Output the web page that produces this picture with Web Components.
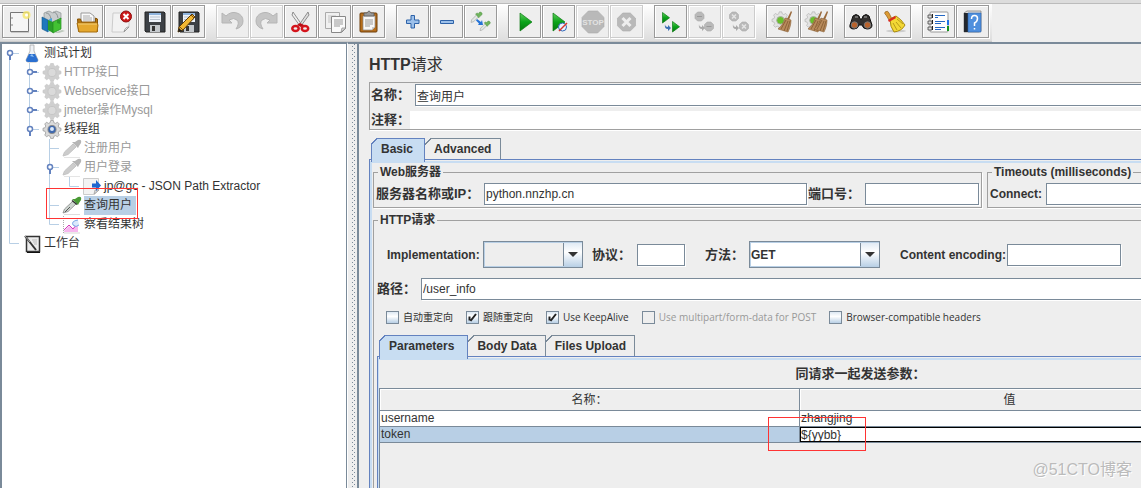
<!DOCTYPE html>
<html lang="zh-CN">
<head>
<meta charset="utf-8">
<title>HTTP请求</title>
<style>
  html, body { margin: 0; height: 100%; overflow: hidden; background: #eee; }
  body { font: 12px/16px "Liberation Sans", "Noto Sans CJK SC", sans-serif; color: #333; }
</style>
</head>
<body>
<jm-app></jm-app>

<script>
const define = (name, css, html, setup) => {
  customElements.define(name, class extends HTMLElement {
    connectedCallback() {
      if (this.shadowRoot) return;
      const root = this.attachShadow({ mode: 'open' });
      const body = typeof html === 'function' ? html(this) : html;
      root.innerHTML = `<style>*{box-sizing:border-box}${css}</style>${body}`;
      if (setup) setup(this, root);
    }
  });
};

/* ---------- icon shapes ---------- */
const floppy = `<path d="M7 7h19l1 1v19H8l-1-1z" fill="#3c4045" stroke="#222"/><path d="M11 8h12v9H11z" fill="#eef3fa"/><path d="M11 8h12v2H11z" fill="#8fb4dd"/><path d="M12 12h10M12 14.500h10" stroke="#b9c3cf"/><path d="M12 20h10v7H12z" fill="#c4c8cc"/><path d="M14 21h3v5h-3z" fill="#333"/>`;
const gear = (f, s, c) => `<g fill="${f}" stroke="${s}"><path d="M8.500 1h3l.6 2.400 1.800.8 2.200-1.300 2 2-1.200 2.200.8 1.900 2.300.6v2.800l-2.300.6-.8 1.900 1.200 2.200-2 2-2.200-1.300-1.800.8-.6 2.300h-3l-.6-2.300-1.800-.8-2.200 1.300-2-2 1.200-2.200-.8-1.900L0 12.400V9.600L2.300 9l.8-1.900-1.200-2.200 2-2 2.200 1.300 1.800-.8z" stroke-width=".7"/><circle cx="10" cy="11" r="4.500" fill="${c}"/></g>`;
const broom = (x) => `<g transform="translate(${x} 0)"><path d="M25 6l1 1-3 8-2-1z" fill="#9a6a3c"/><path d="M19 13l6 2c0 4-1 8-3 12l-10-3c3-3 6-6 7-11z" fill="#b88a5c" stroke="#8c6238" stroke-width=".6"/><path d="M20 15l-5 9M22 16l-4 10M24 16l-3 10" stroke="#80592f" stroke-width=".8" fill="none"/></g>`;
const octagon = (x, y, r) => { const k = r * .42; return `<path d="M${x-k} ${y-r}H${x+k}L${x+r} ${y-k}V${y+k}L${x+k} ${y+r}H${x-k}L${x-r} ${y+k}V${y-k}Z" fill="#b9b9b9" stroke="#aaa" stroke-width=".6"/>`; };
const tri = (x, y, s) => `<path d="M${x} ${y}l${s} ${s*.75}L${x} ${y+s*1.5}z" fill="url(#g)" stroke="#0c7a12" stroke-width=".7"/>`;
const green = `<defs><linearGradient id="g" x1="0" y1="0" x2="0" y2="1"><stop offset="0" stop-color="#5fd05c"/><stop offset=".5" stop-color="#0aa31a"/><stop offset="1" stop-color="#04780f"/></linearGradient></defs>`;
const pip = (x, y, k) => `<g transform="translate(${x} ${y}) scale(${k})"><path d="M0 16l1-4 8-8 3 3-8 8z" fill="#e2e8e4" stroke="#999" stroke-width=".9"/><path d="M7 3l5 6 1.500-2L17 4c1-2-2-5-4-3.500L11 2.500 9.500 1.500z" fill="#6fb45c" stroke="#4b8a40" stroke-width=".7"/></g>`;
const smallArrow = `<path d="M11 19q0 3 3 3v-2l3 3-3 3v-2q-4 0-3-5z"`;

const ICONS = {
  new: `<path d="M8.500 7.500h18v19h-18z" fill="#f5f5f5" stroke="#777"/><path d="M9 27.500h18" stroke="#c8c8c8"/><path d="M10 12v2M10 19v2" stroke="#888"/><circle cx="24.500" cy="10" r="4" fill="#f6e76a" opacity=".8"/><circle cx="24.500" cy="10" r="1.500" fill="#fff"/>`,
  templates: `<path d="M8 8l5-2 4 2 3-2 5 2v6l-12 4-5-4z" fill="#c8cccd" stroke="#8d9294" stroke-width=".7"/><path d="M10 8q4 0 5 6M17 7q4 0 5 6" stroke="#8d9294" fill="none"/><path d="M6 12l6 3v12l-6-3z" fill="#1f78bd" stroke="#135488" stroke-width=".6"/><path d="M12 15l4-2v12l-4 2z" fill="#4aa3e0"/><path d="M12 15l5 2v11l-5-3z" fill="#2c9e2a"/><path d="M17 17l8-4v11l-8 4z" fill="#43c233" stroke="#1f8a1e" stroke-width=".7"/><path d="M21 18v-3h3v4z" fill="#2d9d28"/><path d="M18 28l8-3 3 1-6 2z" fill="#bcc8bb"/>`,
  open: `<path d="M11 19V8h9l4 3v8z" fill="#fafafa" stroke="#999"/><path d="M13 11h7M13 13h9M13 15h9" stroke="#aaa"/><path d="M7.500 14h3l1 3h14V13l2 1v12.500h-19z" fill="#b9780f" stroke="#87550a"/><path d="M7 18h20l1 2-1 7H9z" fill="#e5a82e" stroke="#a66e10"/><path d="M8 19h19" stroke="#f6d078"/>`,
  close: `<path d="M9 8h16v14l-5 5H8z" fill="#f2f2f2" stroke="#ccc"/><path d="M20 27q1-5 5-5z" fill="#fff" stroke="#999"/><circle cx="22" cy="11.500" r="5.500" fill="#cc1a1a" stroke="#8e1010"/><path d="M19.500 9l5 5M24.500 9l-5 5" stroke="#fff" stroke-width="2"/>`,
  save: floppy,
  saveas: floppy + `<path d="M6 27l1-5L20 9l3 3L11 25z" fill="#f2b632" stroke="#5f3b05"/><path d="M8 22l3 3M19 10l3 3" stroke="#7a4d10"/><path d="M6 27l1-4 3 3z" fill="#222"/>`,
  undo: `<path d="M6 8v10h10l-3-3q5-3 8 0t-1 9q7-2 7-8t-6-8q-6-2-11 3z" fill="#c5c5c5" stroke="#b5b5b5"/>`,
  redo: `<path d="M27 8v10H17l3-3q-5-3-8 0t1 9q-7-2-7-8t6-8q6-2 11 3z" fill="#c5c5c5" stroke="#b5b5b5"/>`,
  cut: `<path d="M9 7l9 13-2 1L8 10z" fill="#eee" stroke="#777" stroke-width=".8"/><path d="M24 7l-9 13 2 1 8-11z" fill="#ddd" stroke="#777" stroke-width=".8"/><g fill="none" stroke="#d4141c" stroke-width="2.500"><ellipse cx="11.500" cy="23.500" rx="3.200" ry="2.500"/><ellipse cx="21" cy="23.500" rx="3.200" ry="2.500"/></g><path d="M13 20l3-2 4 2-3 2z" fill="#b80e16"/>`,
  copy: `<path d="M7.500 7.500h14v16h-14z" fill="#f0f0f0" stroke="#aaa"/><path d="M10 11h8M10 13h8M10 15h8M10 17h5" stroke="#c2c2c2"/><path d="M13.500 11.500h14v12l-4 4h-10z" fill="#fafafa" stroke="#888"/><path d="M16 15h9M16 17h9M16 19h9M16 21h6" stroke="#999"/><path d="M23 27l1-4h4z" fill="#ddd" stroke="#888" stroke-width=".7"/>`,
  paste: `<rect x="8" y="8" width="17" height="19" rx="1" fill="#b66e1c" stroke="#6e3e0a"/><path d="M11 11h12v11l-3 3h-9z" fill="#f8f8f8" stroke="#888" stroke-width=".7"/><path d="M13 15h8M13 17h8M13 19h8M13 21h5" stroke="#999"/><path d="M12 10V8h3q2-4 4 0h3v3H12z" fill="#999" stroke="#555" stroke-width=".7"/><path d="M20 25v-3h3z" fill="#ccc"/>`,
  expand: `<path d="M15 10.500h3.500V15H23v3.500h-4.500V23H15v-4.500h-4.500V15H15z" fill="#9cc0ea" stroke="#2d62a8"/>`,
  collapse: `<path d="M10.500 15.500h13v3h-13z" fill="#9cc0ea" stroke="#2d62a8"/>`,
  toggle: pip(7, 7, .65) + pip(16, 16, .6) + `<path d="M13 14l4 3 1-2 1 5-5 0 1-1.500-3-3z" fill="#2573d6"/>`,
  start: green + tri(12, 8, 12),
  startnopause: green + tri(11, 8, 12) + `<circle cx="20.500" cy="22" r="4" fill="#eaf3ff" stroke="#2f67b8"/><path d="M17 26L25 18" stroke="#d8352d" stroke-width="1.500"/>`,
  stop: octagon(17, 17, 11) + `<text x="17" y="20" text-anchor="middle" font-family="Liberation Sans" font-weight="bold" font-size="8" fill="#e3e3e3">STOP</text>`,
  shutdown: octagon(16.5, 17, 9) + `<path d="M12.500 13l8 8M20.500 13l-8 8" stroke="#eee" stroke-width="3"/>`,
  rstart: green + tri(8.5, 7.5, 7) + tri(18.5, 16.5, 7) + smallArrow + ` fill="#3d6fb4"/>`,
  rstop: octagon(11.5, 11.5, 4.5) + octagon(21, 21.5, 4.5) + `<path d="M9 11.500h5M18.500 21.500h5" stroke="#999"/>` + smallArrow + ` fill="#aaa"/>`,
  rshutdown: octagon(12, 11.5, 4.5) + octagon(22, 21.5, 4.5) + `<path d="M10 9.500l4 4M14 9.500l-4 4M20 19.500l4 4M24 19.500l-4 4" stroke="#e5e5e5" stroke-width="1.500"/>` + smallArrow + ` fill="#aaa"/>`,
  clear: `<g transform="translate(6 6) scale(.85)">${gear('#e3e3e3', '#aaa', '#6abf2c')}</g>` + broom(0),
  clearall: `<g transform="translate(5 6) scale(.85)">${gear('#e3e3e3', '#aaa', '#6abf2c')}</g>` + broom(-4) + broom(2),
  search: `<path d="M9 11q3-3 6 0l1 3h2l1-3q3-3 6 0l3 9q0 4-5 4-4 0-5-4h-3q-1 4-5 4-5 0-4-4z" fill="#33302e" stroke="#111"/><circle cx="10.500" cy="20" r="3.200" fill="#b9622b" stroke="#777"/><circle cx="23.500" cy="20" r="3.200" fill="#b9622b" stroke="#777"/><path d="M11 12h3M20 12h3" stroke="#aaa"/>`,
  reset: `<ellipse cx="18" cy="26" rx="10" ry="1.500" fill="#ccc"/><path d="M7 7q3-2 4 1l3 6-3 1-3-5q-2-1-1-3z" fill="#dc9b35" stroke="#93601a" stroke-width=".7"/><path d="M12 14l6-3q5 3 9 9-3 6-11 7-4-5-4-13z" fill="#f3d834" stroke="#a98a10"/><path d="M15 18l4 7M18 17l5 6M19 14l6 5" stroke="#b79b1a" fill="none"/><path d="M10 15l7-4 1 2-7 4z" fill="#d92b20"/>`,
  options: `<rect x="8" y="7" width="18" height="20" rx="1" fill="#fdfdfd" stroke="#999"/><path d="M13 10.500h10M13 12.500h3M13 16.500h10M13 18.500h6M13 22.500h10M13 24.500h6" stroke="#2468c4"/><path d="M25 15h2v5h-2z" fill="#1f73e8"/><path d="M25 21h2v5h-2z" fill="#12931b"/><g fill="#ddd" stroke="#444" stroke-width=".8"><path d="M6 10h4v3H6zM6 16h4v3H6zM6 22h4v3H6z"/></g><path d="M10.500 9v4M10.500 15v4M10.500 21v4" stroke="#222"/>`,
  help: `<path d="M8 8l3-2h14v20l-2 1H8z" fill="#ddd" stroke="#777" stroke-width=".7"/><path d="M8 8h4v19H8z" fill="#23272d"/><path d="M12 8h13v19H12z" fill="#4f8fdd" stroke="#2c62a8" stroke-width=".6"/><path d="M15.500 14q0-3.500 3-3.500t3 3-3 4.500v3M18.500 23v1.500" fill="none" stroke="#fff" stroke-width="1.500"/>`
};

const page = `<path d="M1.500 1.500h15v12l-4 4h-11z" fill="#f3f3f3" stroke="#ccc"/>`;
const NODES = {
  plan: `<path d="M8 1h4v6l4 9q0 2-2 2H6q-2 0-2-2l4-9z" fill="#eef1f5" stroke="#aaa" stroke-width=".8"/><path d="M7 10h6l3 6q0 2-2 2H6q-2 0-2-2z" fill="#2a6fd0"/><path d="M8 12l2-2 2 3z" fill="#8dc0f5"/>`,
  gear: `<g transform="translate(1 -.4) scale(.9)">${gear('#cfcfcf', '#c4c4c4', '#dadada')}</g>`,
  threads: `<g transform="translate(1 -.4) scale(.9)">${gear('#dadada', '#888', '#3f69ae')}<circle cx="10" cy="10.500" r="2.200" fill="#dbe8fa"/></g>`,
  grey: `<path d="M1 17l1.500-4L11 5l3 3-8 7.500z" fill="#ccc" stroke="#c4c4c4"/><path d="M10 3l6 6 1-2 2-3q1-4-3-3l-3 2z" fill="#b5b5b5"/><path d="M2 18.500h16" stroke="#e5e5e5"/>`,
  sampler: `<path d="M1 17l1.500-4L11 5l3 3-8 7.500z" fill="#cdd5d0" stroke="#888" stroke-width=".8"/><path d="M10 3l6 6 1-2 2-3q1-4-3-3l-3 2z" fill="#4a9a35"/><path d="M10 4.500l5 4" stroke="#333" stroke-width="1.500"/><path d="M3 16l5-5" stroke="#555"/><path d="M2 18.500h16" stroke="#ddd"/>`,
  extract: page + `<path d="M12 17l1-4h4z" fill="#ddd" stroke="#999" stroke-width=".7"/><path d="M10 6.500h4V3l5 5.500-5 5.500v-3.500h-4z" fill="#1f66cf"/>`,
  results: `<path d="M1.500 1v17H18" stroke="#aaa" fill="none" stroke-dasharray="1 1"/><path d="M2 16l5-5 4 3 5-8v11H2z" fill="#f6b7ee"/><path d="M2 15l5-5 4 4 4-5" stroke="#d23bb9" fill="none"/><path d="M16 5q-7 1-5 5 3 3 6 0" stroke="#7aa7e6" fill="#dbe9fb"/>`,
  bench: `<path d="M4.500 2.500h13v15h-13z" fill="#ececec" stroke="#333" stroke-width="1.500"/><path d="M5 18.500h13" stroke="#111"/><path d="M3 2l11 14" stroke="#333" stroke-width="2"/><path d="M3 2l5 6" stroke="#aaa"/><path d="M10 6h5M11 8h4M12 10h3" stroke="#bbb"/>`
};

/* ---------- toolbar ---------- */
define('jm-tool', `
  :host { display: block; }
  button { display: block; width: 33px; height: 33px; padding: 0; border: 1px solid #999; background: #eee; box-shadow: 1px 1px 0 #fff, inset 1px 1px 0 #fff; }
  button:disabled { border-color: #ccc; }
  svg { display: block; width: 31px; height: 31px; }`,
  el => `<button type="button" aria-label="${el.getAttribute('icon')}" ${el.hasAttribute('disabled') ? 'disabled' : ''}><svg viewBox="1 1 31 31">${ICONS[el.getAttribute('icon')]}</svg></button>`);

const groups = ['new templates open close save saveas', '-undo -redo cut copy paste', 'expand collapse toggle',
  'start startnopause -stop -shutdown', 'rstart -rstop -rshutdown', 'clear clearall', 'search reset', 'options help'];
define('jm-toolbar', `
  :host { display: flex; flex: none; height: 42px; border-top: 3px solid #dcdcdc; background: #eee; }
  .bar { display: flex; gap: 11px; padding: 1px 3px 0 2px; border-top: 1px solid #bbb; border-bottom: 1px solid #ccc; background: linear-gradient(#fff, #ddd); }
  .group { display: flex; gap: 1px; }
  .rest { flex: 1; border-top: 1px solid #bbb; }`,
  `<div class="bar">${groups.map(g => `<div class="group">${g.split(' ').map(i => `<jm-tool icon="${i.replace('-', '')}" ${i[0] === '-' ? 'disabled' : ''}></jm-tool>`).join('')}</div>`).join('')}</div><div class="rest"></div>`);

/* ---------- tree ---------- */
const line = d => `<path d="${d}" stroke="#b8cfe5" fill="none"/>`;
const knob = d => `<path d="${d}" stroke="#6382bf" stroke-width="2"/><circle cx="8" cy="9" r="2.500" fill="#fff" stroke="#6382bf" stroke-width="1.500"/>`;
const GUIDES = {
  '.': '',
  'I': line('M7.500 0V19'),
  'T': line('M7.500 0V19M8 9.500H17'),
  'L': line('M7.500 0V9.500H17'),
  'R': line('M7.500 9V19M8 9.500H17') + knob('M8 11v5'),
  'E': line('M7.500 0V19M8 9.500H17') + knob('M8 11v5'),
  'Z': line('M7.500 0V9.500H17') + knob('M8 11v5'),
  'C': line('M7.500 0V19M8 9.500H17') + knob('M10 9h5')
};
define('jm-node', `
  :host { display: flex; position: relative; height: 19px; }
  svg { flex: none; width: 20px; height: 19px; }
  span { margin-left: 2px; padding-right: 4px; line-height: 19px; white-space: nowrap; }
  :host([off]) span { color: #999; }
  :host([selected]) span { background: #b8cfe5; }`,
  el => [...el.getAttribute('guides')].map(g => `<svg viewBox="0 0 20 19">${GUIDES[g]}</svg>`).join('') +
    `<svg viewBox="0 0 20 19">${NODES[el.getAttribute('icon')]}</svg><span><slot></slot></span>`);

define('jm-mark', `
  :host { position: absolute; z-index: 5; border: 1px solid #f33; pointer-events: none; }`, '');

define('jm-tree', `
  :host { display: block; flex: 0 0 347px; overflow: hidden; background: #fff; border: solid #7a8a99; border-width: 2px 1px 0 2px; }
  .sel { position: relative; }
  .sel jm-mark { left: 44px; top: -27px; width: 92px; height: 31px; }`,
  `<jm-node guides="R" icon="plan">测试计划</jm-node>
   <jm-node guides="IC" icon="gear" off>HTTP接口</jm-node>
   <jm-node guides="IC" icon="gear" off>Webservice接口</jm-node>
   <jm-node guides="IC" icon="gear" off>jmeter操作Mysql</jm-node>
   <jm-node guides="IZ" icon="threads">线程组</jm-node>
   <jm-node guides="I.T" icon="grey" off>注册用户</jm-node>
   <jm-node guides="I.E" icon="grey" off>用户登录</jm-node>
   <jm-node guides="I.IL" icon="extract">jp@gc - JSON Path Extractor</jm-node>
   <jm-node guides="I.T" icon="sampler" selected>查询用户</jm-node>
   <div class="sel"><jm-node guides="I.L" icon="results">察看结果树</jm-node><jm-mark></jm-mark></div>
   <jm-node guides="L" icon="bench">工作台</jm-node>`);

define('jm-splitter', `
  :host { display: block; flex: 0 0 10px; border-top: 2px solid #7a8a99; border-left: 1px solid #fff;
    background: url("data:image/svg+xml,%3Csvg xmlns='http://www.w3.org/2000/svg' width='4' height='4'%3E%3Cpath d='M0 0h1v1H0zM2 2h1v1H2z' fill='%237a8a99'/%3E%3C/svg%3E") 4px 2px / 4px 4px repeat-y #eee; }`, '');

/* ---------- form controls ---------- */
define('jm-field', `
  :host { display: flex; align-items: center; }
  label { flex: none; width: var(--label, auto); font-weight: bold; white-space: nowrap; }
  :host([cjk]) label { font-size: 13px; }
  input { flex: 1; min-width: 0; width: 100%; height: 22px; padding: 0 1px; border: 1px solid #7a8a99; border-radius: 0; outline: 0; background: #fff; font: inherit; color: #333; box-shadow: 1px 1px 0 #fff, inset -1px -1px 0 #fff; }
  :host([plain]) input { height: 18px; border: 0; box-shadow: none; }`,
  el => `<label for="f">${el.getAttribute('label')}</label><input id="f" type="text" value="${el.getAttribute('value') || ''}">`);

define('jm-select', `
  :host { display: flex; align-items: center; }
  label { flex: none; width: var(--label, auto); font-weight: bold; white-space: nowrap; }
  :host([cjk]) label { font-size: 13px; }
  select { flex: 1; min-width: 0; height: 27px; padding: 0 20px 0 1px; appearance: none; border: 1px solid #7a8a99; border-radius: 0; outline: 0; font: bold 12px "Liberation Sans", sans-serif; color: #333;
    box-shadow: inset 1px 1px 0 #b8cfe5, inset 0 -1px 0 #b8cfe5;
    background:
      url("data:image/svg+xml,%3Csvg xmlns='http://www.w3.org/2000/svg' width='10' height='5'%3E%3Cpath d='M0 0h10L5 5z' fill='%23333'/%3E%3C/svg%3E") right 4px center no-repeat,
      linear-gradient(#dde8f3, #fff 40%, #b8cfe5) right / 18px 100% no-repeat,
      linear-gradient(#7a8a99, #7a8a99) right / 19px 100% no-repeat,
      var(--fill, #fff); }`,
  el => `<label for="s">${el.getAttribute('label')}</label><select id="s"><option>${el.getAttribute('value') || ''}</option></select>`);

define('jm-check', `
  :host { display: flex; align-items: center; }
  input { flex: none; width: 13px; height: 13px; margin: 0 4px 0 0; appearance: none; border: 1px solid #7a8a99; background: linear-gradient(#dde8f3, #fff 40%, #b8cfe5); }
  input:checked { background: url("data:image/svg+xml,%3Csvg xmlns='http://www.w3.org/2000/svg' width='11' height='11'%3E%3Cpath d='M2.500 4.500v4M3.500 9L9 2' stroke='%23222' stroke-width='2' fill='none'/%3E%3C/svg%3E"), linear-gradient(#dde8f3, #fff 40%, #b8cfe5); }
  input:disabled { background: #eee; }
  label { font: 10px/14px "Open Sans", "Noto Sans CJK SC", sans-serif; white-space: nowrap; }
  :host([disabled]) label { color: #999; }`,
  el => `<input id="c" type="checkbox" ${el.hasAttribute('checked') ? 'checked' : ''} ${el.hasAttribute('disabled') ? 'disabled' : ''}><label for="c"><slot></slot></label>`);

define('jm-group', `
  :host { display: flex; flex-direction: column; }
  fieldset { display: flex; flex: 1; flex-direction: column; margin: 0; padding: 0; min-width: 0; border: 1px solid #a0a0a0; box-shadow: 1px 1px 0 #fff; }
  legend { margin-left: 4px; padding: 0 2px; font-weight: bold; line-height: 16px; height: 16px; }`,
  el => `<fieldset><legend>${el.getAttribute('label')}</legend><slot></slot></fieldset>`);

define('jm-tabs', `
  :host { display: flex; flex-direction: column; }
  .tabs { display: flex; flex: none; padding-left: 2px; position: relative; }
  button { height: 21px; padding: 0 var(--pad, 10px) 0 9px; border: 0; font: bold 12px/20px "Liberation Sans", sans-serif; color: #333; white-space: nowrap;
    --line: #7a8a99; --fill: #eee;
    background:
      linear-gradient(135deg, #eee 0 4px, var(--line) 4px 5px, transparent 5px) 0 0 / 8px 8px no-repeat,
      linear-gradient(var(--line), var(--line)) 0 0 / 100% 1px no-repeat,
      linear-gradient(var(--line), var(--line)) 100% 0 / 1px 100% no-repeat,
      linear-gradient(var(--line), var(--line)) 0 0 / var(--left, 0) 100% no-repeat,
      var(--fill); }
  button[aria-selected=true] { --line: #6382bf; --fill: #c8ddf2; --left: 1px; height: 24px; margin-bottom: -3px; padding: 0 var(--selpad, 12px) 3px 10px; z-index: 1; }
  .panel { flex: 1; display: flex; flex-direction: column; border-top: 1px solid #6382bf; border-left: 1px solid #6382bf; }
  .rim { flex: 1; display: flex; flex-direction: column; margin-top: 1px; border-top: 2px solid #c8ddf2; border-left: var(--rim, 2px) solid #c8ddf2; }`,
  el => `<div class="tabs" role="tablist">${el.getAttribute('tabs').split('|').map((t, i) => `<button type="button" role="tab" aria-selected="${i === 0}">${t}</button>`).join('')}</div><div class="panel"><div class="rim"><slot></slot></div></div>`,
  (el, root) => root.querySelectorAll('button').forEach(b => b.addEventListener('click', () =>
    root.querySelectorAll('button').forEach(o => o.setAttribute('aria-selected', o === b)))));

define('jm-params', `
  :host { display: flex; flex: 1; flex-direction: column; }
  h3 { margin: 0; font-size: 13px; line-height: 28px; text-align: center; }
  .area { flex: 1; border: solid #7a8a99; border-width: 1px 0 0 1px; }
  table { width: 100%; table-layout: fixed; border-collapse: separate; border-spacing: 0; }
  th, td { padding: 0; border: solid #7a8a99; border-width: 0 1px 1px 0; text-align: left; font-weight: normal; }
  th { height: 22px; line-height: 20px; text-align: center; box-shadow: inset 1px 1px 0 #fff; }
  td { position: relative; height: 16px; line-height: 15px; padding-left: 1px; background: #fff; }
  tr.on td { background: #b8cfe5; }
  tr.on td.edit { padding: 0; background: #fff; }
  .c { width: 420px; }
  input { display: block; width: 100%; height: 15px; margin: 0; padding: 0; border: 1px solid #000; border-radius: 0; outline: 0; font: inherit; line-height: 13px; color: #333; background: #fff; }
  jm-mark { left: -32px; top: -10px; width: 98px; height: 34px; }`,
  `<h3>同请求一起发送参数：</h3>
   <div class="area"><table>
     <thead><tr><th class="c">名称：</th><th class="c">值</th><th></th></tr></thead>
     <tbody>
       <tr><td>username</td><td>zhangjing</td><td></td></tr>
       <tr class="on"><td>token</td><td class="edit"><input aria-label="值" value="\${yybb}"><jm-mark></jm-mark></td><td></td></tr>
     </tbody></table></div>`);

/* The form keeps a minimum size and is clipped by its pane. */
define('jm-http-form', `
  :host { display: flex; flex: 1; min-width: 0; overflow: hidden; border: solid #7a8a99; border-width: 2px 0 0 2px; }
  form { display: flex; flex: 1; flex-direction: column; min-width: 984px; min-height: 560px; padding: 9px 0 0 10px; }
  h2 { margin: 0 0 5px; font-size: 16px; line-height: 24px; }
  h2 span { font-weight: normal; }
  .head { display: grid; gap: 5px; padding: 1px 0 0 1px; border: 1px solid #a0a0a0; box-shadow: 1px 1px 0 #fff; margin-bottom: 8px; }
  .name { --label: 44px; }
  .note { --label: 39px; }
  .main { flex: 1; }
  .top { display: flex; gap: 5px; padding: 1px 0 4px 1px; }
  .web { flex: 0 0 609px; }
  .time { flex: 1; }
  .http { flex: 1; margin-left: 1px; }
  .row { display: flex; align-items: center; }
  .server { padding: 3px 2px 2px; gap: 1px; }
  .host { --label: 108px; flex: 1; }
  .port { --label: 57px; flex: 0 0 171px; }
  .conn { --label: 56px; flex: 1; }
  .opts { padding: 13px 0 10px 13px; gap: 20px; }
  .impl { --label: 96px; --fill: #eee; flex: 0 0 196px; margin-right: -11px; }
  .prot { --label: 45px; flex: 0 0 93px; }
  .meth { --label: 44px; flex: 0 0 175px; }
  .enc { --label: 107px; flex: 0 0 221px; }
  .path { --label: 44px; margin-left: 3px; }
  .checks { padding: 10px 0 11px 12px; height: 35px; gap: 13px; }
  .sub { flex: 1; margin-left: 3px; --rim: 1px; --pad: 9px; --selpad: 14px; }`,
  `<form>
    <h2>HTTP<span>请求</span></h2>
    <div class="head">
      <jm-field class="name" cjk label="名称：" value="查询用户"></jm-field>
      <jm-field class="note" cjk plain label="注释："></jm-field>
    </div>
    <jm-tabs class="main" tabs="Basic|Advanced">
      <div class="top">
        <jm-group class="web" label="Web服务器"><div class="row server">
          <jm-field class="host" cjk label="服务器名称或IP：" value="python.nnzhp.cn"></jm-field>
          <jm-field class="port" cjk label="端口号："></jm-field></div></jm-group>
        <jm-group class="time" label="Timeouts (milliseconds)"><div class="row server">
          <jm-field class="conn" label="Connect:"></jm-field></div></jm-group>
      </div>
      <jm-group class="http" label="HTTP请求">
        <div class="row opts">
          <jm-select class="impl" label="Implementation:"></jm-select>
          <jm-field class="prot" cjk label="协议："></jm-field>
          <jm-select class="meth" cjk label="方法：" value="GET"></jm-select>
          <jm-field class="enc" label="Content encoding:"></jm-field>
        </div>
        <jm-field class="path" cjk label="路径：" value="/user_info"></jm-field>
        <div class="row checks">
          <jm-check>自动重定向</jm-check>
          <jm-check checked>跟随重定向</jm-check>
          <jm-check checked>Use KeepAlive</jm-check>
          <jm-check disabled>Use multipart/form-data for POST</jm-check>
          <jm-check>Browser-compatible headers</jm-check>
        </div>
        <jm-tabs class="sub" tabs="Parameters|Body Data|Files Upload"><jm-params></jm-params></jm-tabs>
      </jm-group>
    </jm-tabs>
  </form>`);

define('jm-app', `
  :host { display: flex; flex-direction: column; height: 100vh; position: relative; overflow: hidden; }
  main { display: flex; flex: 1; min-height: 0; }
  .water { position: absolute; right: 9px; bottom: 6px; font-size: 16px; line-height: 24px; color: #bbb; text-shadow: 1px 1px 0 #fff; }`,
  `<jm-toolbar></jm-toolbar>
   <main><jm-tree></jm-tree><jm-splitter></jm-splitter><jm-http-form></jm-http-form></main>
   <div class="water">@51CTO博客</div>`);
</script>
</body>
</html>
